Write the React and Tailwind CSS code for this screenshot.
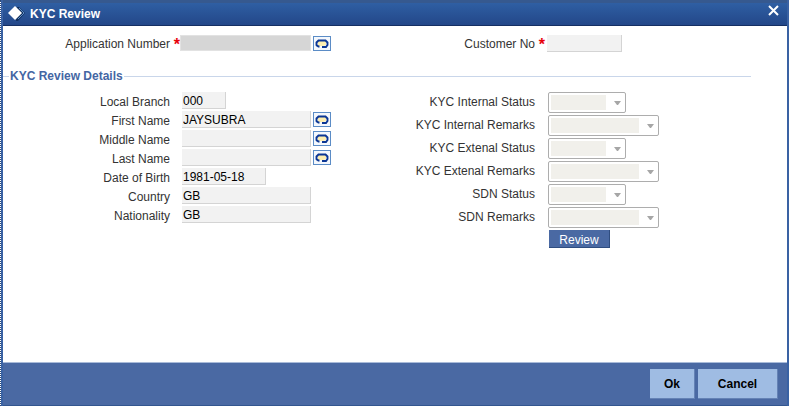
import { useState } from "react";

const customerFields = [
  { name: "localBranch", label: "Local Branch", width: "w-11" },
  { name: "firstName", label: "First Name", width: "w-[129px]", lookup: true },
  { name: "middleName", label: "Middle Name", width: "w-[129px]", lookup: true },
  { name: "lastName", label: "Last Name", width: "w-[129px]", lookup: true },
  { name: "dateOfBirth", label: "Date of Birth", width: "w-[84px]" },
  { name: "country", label: "Country", width: "w-[129px]" },
  { name: "nationality", label: "Nationality", width: "w-[129px]" },
];

const statusFields = [
  { name: "internalStatus", label: "KYC Internal Status", width: "w-[78px]" },
  { name: "internalRemarks", label: "KYC Internal Remarks", width: "w-[111px]" },
  { name: "externalStatus", label: "KYC Extenal Status", width: "w-[78px]" },
  { name: "externalRemarks", label: "KYC Extenal Remarks", width: "w-[111px]" },
  { name: "sdnStatus", label: "SDN Status", width: "w-[78px]" },
  { name: "sdnRemarks", label: "SDN Remarks", width: "w-[111px]" },
];

const Logo = () => (
  <svg width="18" height="16" viewBox="0 0 18 16" aria-hidden="true">
    <path d="M9 1h2l6 6-7 8H8z" fill="#12305f" />
    <path d="M11 2l5 5-6 6" fill="none" stroke="#5f8fc4" />
    <path d="M7 0l7 7-7 7-7-7z" fill="#fff" />
  </svg>
);

const LookupButton = ({ label }) => (
  <button
    type="button"
    aria-label={label}
    className="ml-0.5 flex h-[15px] w-[18px] items-center justify-center border border-[#5b8cc6] bg-[#f4f8fd]"
  >
    <svg width="14" height="11" viewBox="0 0 14 11" aria-hidden="true">
      <path d="M3 3h8v4l-3 1H3z" fill="#fdeeb0" />
      <path
        d="M3 8.5L1.5 7V4.5L3.5 2.5h7l2 2V7L11 9H7"
        fill="none"
        stroke="#0b3694"
        strokeWidth="1.9"
      />
      <path d="M2 7.5h2.5v2H3z" fill="#0b3694" />
    </svg>
  </button>
);

const RequiredMark = () => (
  <span className="w-2.5 pt-1 text-right text-base leading-4 font-bold text-red-600">*</span>
);

const inputStyle =
  "h-[17px] border-r border-b border-[#d4d4d4] bg-[#f2f2f2] px-px pt-0.5 text-black focus:outline-none";

const App = () => {
  const [customer, setCustomer] = useState({
    localBranch: "000",
    firstName: "JAYSUBRA",
    middleName: "",
    lastName: "",
    dateOfBirth: "1981-05-18",
    country: "GB",
    nationality: "GB",
  });

  // Function to handle change
  const handleChange = (e) => {
    setCustomer((current) => {
      return { ...current, [e.target.name]: e.target.value };
    });
  };

  return (
    <div className="flex min-h-screen flex-col bg-white pb-px font-['Liberation_Sans',Arial,sans-serif] text-xs text-[#333]">
      <div className="flex grow flex-col border-l border-dotted border-[#2c4a7c]">
        <div className="flex grow flex-col border-x-2 border-[#3a62a3]">
          {/* Title bar */}
          <header className="flex h-[26px] items-center border-t-3 border-b border-t-[#36598f] border-b-[#152f63] bg-linear-to-b from-[#2f5fa3] to-[#234789] pr-[7px] pl-[5px] text-white">
            <Logo />
            <h1 className="ml-1 grow font-bold">KYC Review</h1>
            <button type="button" aria-label="Close" className="mb-1.5">
              <svg width="13" height="12" viewBox="0 0 13 12" aria-hidden="true">
                <path d="M2 1l9 9M11 1L2 10" stroke="#fff" strokeWidth="2" />
              </svg>
            </button>
          </header>

          <form
            className="flex grow flex-col"
            onSubmit={(e) => e.preventDefault()}
          >
            <div className="grow pr-9">
              {/* Keys */}
              <div className="grid grid-cols-2 pt-2">
                <div className="flex h-[18px] items-center">
                  <label htmlFor="applicationNumber" className="w-[167px] pt-0.5 text-right">
                    Application Number
                  </label>
                  <RequiredMark />
                  <input
                    id="applicationNumber"
                    className="h-4 w-[131px] border border-[#e2e2e2] bg-[#d6d6d6] px-px text-black focus:outline-none"
                  />
                  <LookupButton label="Find application number" />
                </div>
                <div className="flex h-[18px] items-center">
                  <label htmlFor="customerNo" className="w-[158px] pt-0.5 text-right">
                    Customer No
                  </label>
                  <RequiredMark />
                  <input id="customerNo" className={`${inputStyle} ml-0.5 w-[75px]`} />
                </div>
              </div>

              {/* Details */}
              <section className="mt-4">
                <div className="flex items-center">
                  <span className="w-1.5 border-t border-[#c9d6ea]" />
                  <h2 className="px-px font-bold text-[#4466a3]">KYC Review Details</h2>
                  <span className="grow border-t border-[#c9d6ea]" />
                </div>
                <div className="mt-2 grid grid-cols-2">
                  <div className="flex flex-col gap-0.5">
                    {customerFields.map((field) => (
                      <div key={field.name} className="flex h-[17px] items-center">
                        <label htmlFor={field.name} className="mr-3 w-[167px] pt-0.5 text-right">
                          {field.label}
                        </label>
                        <input
                          id={field.name}
                          name={field.name}
                          value={customer[field.name]}
                          onChange={handleChange}
                          className={`${inputStyle} ${field.width}`}
                        />
                        {field.lookup && <LookupButton label={`Find ${field.label}`} />}
                      </div>
                    ))}
                  </div>
                  <div className="flex flex-col gap-0.5">
                    {statusFields.map((field) => (
                      <div key={field.name} className="flex items-center">
                        <label htmlFor={field.name} className="mr-[13px] w-[158px] pb-0.5 text-right">
                          {field.label}
                        </label>
                        <div
                          className={`flex h-[21px] items-center rounded-xs border border-[#adadad] bg-white pl-0.5 ${field.width}`}
                        >
                          <select
                            id={field.name}
                            disabled
                            className="h-[15px] min-w-0 grow appearance-none bg-[#f1f0eb]"
                          >
                            <option value=""></option>
                          </select>
                          <svg
                            width="7"
                            height="4"
                            viewBox="0 0 7 4"
                            className="mr-1 ml-2 shrink-0"
                            aria-hidden="true"
                          >
                            <path d="M0 0h7L4 4H3z" fill="#a6a6a6" />
                          </svg>
                        </div>
                      </div>
                    ))}
                    <button
                      type="button"
                      className="ml-[172px] h-[18px] w-[61px] border-r border-b border-[#2f4d80] bg-[#4a69a3] pt-0.5 text-white"
                    >
                      Review
                    </button>
                  </div>
                </div>
              </section>
            </div>

            {/* Footer */}
            <footer className="flex justify-end gap-[3px] border-t border-b border-t-[#a9bbd9] border-b-[#33568f] bg-[#4a69a3] pt-1.5 pr-[9px] pb-1.5 font-bold text-black">
              <button
                type="submit"
                className="h-[30px] w-[45px] border-r border-b border-[#6482b5] bg-[#9fbce3]"
              >
                Ok
              </button>
              <button
                type="button"
                className="h-[30px] w-20 border-r border-b border-[#6482b5] bg-[#9fbce3]"
              >
                Cancel
              </button>
            </footer>
          </form>
        </div>
      </div>
    </div>
  );
};

export default App;
